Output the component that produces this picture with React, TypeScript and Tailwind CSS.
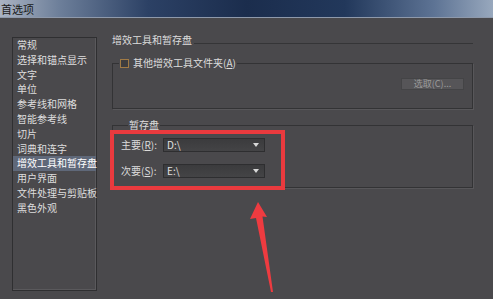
const font = { fontFamily: '"Noto Sans CJK SC", "Noto Sans", sans-serif' };

const items = [
  "常规",
  "选择和锚点显示",
  "文字",
  "单位",
  "参考线和网格",
  "智能参考线",
  "切片",
  "词典和连字",
  "增效工具和暂存盘",
  "用户界面",
  "文件处理与剪贴板",
  "黑色外观",
];

function DriveSelect({ label, hotkey, value }: { label: string; hotkey: string; value: string }) {
  return (
    <div className="flex h-[14px] items-center">
      <span className="w-[42px] whitespace-nowrap text-[10px] leading-[14px] text-[#dcdcdc]">
        {label}(<u>{hotkey}</u>):
      </span>
      <div className="flex h-[14px] w-[102px] items-center justify-between border border-[#2e2e30] bg-gradient-to-b from-[#3b3b3d] to-[#444446] pl-[3px] pr-[5px]">
        <span className="text-[10px] leading-[12px] text-[#e0e0e0]">{value}</span>
        <svg width="6" height="4" viewBox="0 0 6 4">
          <polygon points="0,0 6,0 3,4" fill="#d8d8d8" />
        </svg>
      </div>
    </div>
  );
}

export default function App() {
  return (
    <div className="relative h-[299px] w-[493px] overflow-hidden bg-[#4a494c]" style={font}>
      {/* title bar */}
      <div className="flex h-[17px] items-center bg-[linear-gradient(90deg,#aab3c2_0%,#6d7f9a_12%,#2c4165_30%,#1b2d4d_50%,#22385b_70%,#5d7394_88%,#98a8bd_100%)] pl-[1px]">
        <span className="text-[11px] leading-[12px] text-[#1a1a1a]">首选项</span>
      </div>
      <div className="h-[1px] bg-[#8e99ab]" />

      <div className="flex pl-3 pt-[16px]">
        {/* category list */}
        <div className="mt-[3px] h-[254px] w-[85px] border border-[#2f2f31] shadow-[inset_-1px_-1px_0_#5a595c]">
          {items.map((it) => (
            <div
              key={it}
              className={
                "h-[14.8px] whitespace-nowrap pl-[4px] text-[10px] leading-[14.8px] " +
                (it === "增效工具和暂存盘" ? "bg-[#5f6879] text-white" : "text-[#dedede]")
              }
            >
              {it}
            </div>
          ))}
        </div>

        {/* settings panel */}
        <div className="ml-[15px] w-[361px]">
          <div className="flex h-[12px] items-end">
            <span className="text-[10px] leading-[12px] text-[#dcdcdc]">增效工具和暂存盘</span>
            <div className="mb-[2px] ml-[2px] h-[1px] flex-1 bg-[#353537]" />
          </div>

          <fieldset className="mt-[11px] h-[52px] border border-[#333335] shadow-[1px_1px_0_#58575a]">
            <legend className="ml-[6px] flex items-center gap-[4px] px-[1px]">
              <span className="h-[9px] w-[9px] border border-[#a07a45] bg-[#3e3d3f]" />
              <span className="text-[10px] leading-[12px] text-[#dcdcdc]">
                其他增效工具文件夹(<u>A</u>)
              </span>
            </legend>
            <div className="mr-[8px] mt-[9px] flex justify-end">
              <div className="flex h-[12px] w-[63px] items-center justify-center border border-[#444446] bg-[#565558] text-[9px] leading-[10px] text-[#9c9c9c]">
                选取(C)...
              </div>
            </div>
          </fieldset>

          <fieldset className="mt-[10px] border border-[#333335] pb-[9px] pl-[8px] shadow-[1px_1px_0_#58575a]">
            <legend className="ml-[7px] px-[1px] text-[10px] leading-[12px] text-[#dcdcdc]">暂存盘</legend>
            <div className="mt-[7px] flex flex-col gap-[12px]">
              <DriveSelect label="主要" hotkey="R" value="D:\" />
              <DriveSelect label="次要" hotkey="S" value="E:\" />
            </div>
          </fieldset>
        </div>
      </div>

      {/* red highlight annotation */}
      <div className="absolute left-[110px] top-[130px] h-[60px] w-[175px] border-4 border-[#ea3a3e]" />
      <svg className="absolute left-0 top-0" width="493" height="299" viewBox="0 0 493 299">
        <polygon
          points="258,202 267,217 262.5,216.5 273,292 271,292 256,218 250,219"
          fill="#ee3b40"
        />
      </svg>
    </div>
  );
}
